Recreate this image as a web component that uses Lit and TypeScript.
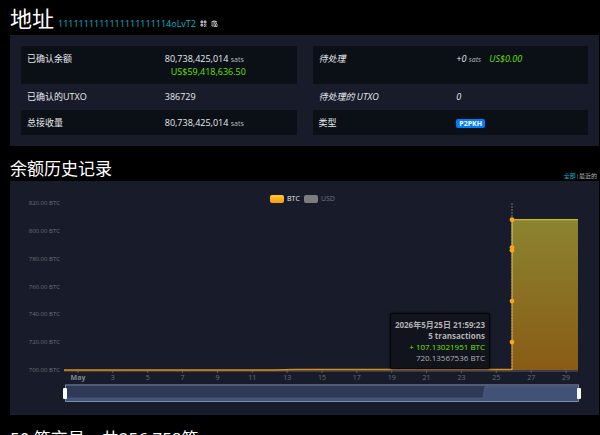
import { LitElement, html, svg, css } from "lit";
import { customElement, state } from "lit/decorators.js";

const LEFT = 54;
const RIGHT = 568;
const TOP = 22;
const BOTTOM = 189;
const STEP_X = 502;

const yTicks = [820, 800, 780, 760, 740, 720, 700];
const xTicks = ["May", "3", "5", "7", "9", "11", "13", "15", "17", "19", "21", "23", "25", "27", "29"];
const points = [808, 788, 786, 749.5, 720.1];

const yOf = (value: number) => BOTTOM - ((value - 700) / 120) * (BOTTOM - TOP);
const xOf = (index: number) => 68 + (index * (556 - 68)) / 14;

@customElement("balance-chart")
export class BalanceChart extends LitElement {
  @state() private from = 0;
  @state() private to = 100;

  static styles = css`
    :host {
      display: block;
      position: relative;
    }
    .plot {
      display: block;
      width: 100%;
      height: auto;
    }
    .axis {
      fill: #6b6e76;
      font-size: 6px;
    }
    .axis-y {
      text-anchor: end;
    }
    .axis-x {
      font-size: 7px;
      text-anchor: middle;
    }
    .month {
      font-weight: 700;
      fill: #85878e;
    }
    .legend {
      position: absolute;
      top: 13px;
      left: 0;
      right: 0;
      display: flex;
      justify-content: center;
      gap: 4px;
      padding-right: 4px;
    }
    .series {
      display: flex;
      align-items: center;
      gap: 3px;
      border: 0;
      padding: 0;
      background: none;
      color: #e6e6e8;
      font: inherit;
      font-size: 7px;
      line-height: 9px;
    }
    .swatch {
      width: 14px;
      height: 8px;
      border-radius: 2px;
      background: linear-gradient(#fdc92f, #fb9a0b);
    }
    .off {
      color: #71747b;
    }
    .off .swatch {
      background: #7c7c7c;
    }
    .tooltip {
      position: absolute;
      right: 109px;
      top: 132px;
      box-sizing: border-box;
      border: 1px solid #05060a;
      border-radius: 2px;
      padding: 5px 4px;
      background: #11131d;
      box-shadow: 0 0 3px #05060a;
      color: #b1b1b1;
      font-size: 8px;
      line-height: 11px;
      text-align: right;
      white-space: nowrap;
    }
    .strong {
      font-weight: 700;
    }
    .gain {
      color: #70e800;
    }
    .zoom {
      position: absolute;
      left: 9%;
      right: 3%;
      bottom: 13px;
      height: 18px;
    }
    .zoom input {
      position: absolute;
      inset: 0;
      width: 100%;
      height: 18px;
      margin: 0;
      appearance: none;
      background: none;
      pointer-events: none;
    }
    .zoom input::-webkit-slider-thumb {
      appearance: none;
      width: 4px;
      height: 11px;
      border-radius: 1px;
      background: #fff;
      pointer-events: auto;
    }
  `;

  render() {
    return html`
      <svg class="plot" viewBox="0 0 589 234" role="img" aria-label="余额历史记录">
        <defs>
          <linearGradient id="fill" x1="0" y1="0" x2="0" y2="1">
            <stop offset="0" stop-color="#8b8430" />
            <stop offset="1" stop-color="#895b15" />
          </linearGradient>
          <linearGradient id="edge" x1="0" y1="0" x2="0" y2="1">
            <stop offset="0" stop-color="#e8d535" />
            <stop offset="1" stop-color="#e8920f" />
          </linearGradient>
        </defs>
        ${yTicks.map((v) => svg`<text class="axis axis-y" x="50" y=${yOf(v) + 2}>${v}.00 BTC</text>`)}
        <line x1=${LEFT} y1=${BOTTOM + 1} x2=${RIGHT} y2=${BOTTOM + 1} stroke="#5c5f68" />
        ${xTicks.map(
          (label, i) => svg`
            <line x1=${xOf(i)} x2=${xOf(i)} y1=${BOTTOM} y2=${BOTTOM + 3} stroke="#5c5f68" />
            <text class="axis axis-x ${i === 0 ? "month" : ""}" x=${xOf(i)} y="199">${label}</text>`
        )}
        <rect x=${STEP_X} y=${yOf(808)} width=${RIGHT - STEP_X} height=${BOTTOM - yOf(808)} fill="url(#fill)" />
        <path d="M${LEFT} ${BOTTOM}H265L285 188.5H${STEP_X}" fill="none" stroke="#e08c10" stroke-width="1.5" />
        <rect x=${STEP_X - 0.5} y=${yOf(808)} width="1" height=${BOTTOM - yOf(808)} fill="url(#edge)" />
        <line x1=${STEP_X} y1=${yOf(808)} x2=${RIGHT} y2=${yOf(808)} stroke="#e8d535" />
        <line x1=${STEP_X} y1=${TOP} x2=${STEP_X} y2=${BOTTOM} stroke="#b1b4bb" stroke-dasharray="2 1" opacity="0.6" />
        ${points.map((v) => svg`<circle cx=${STEP_X} cy=${yOf(v)} r="2.4" fill="#fba51f" />`)}
        <rect x="55" y="203" width="514" height="17" fill="#2e3a57" />
        <path d="M55 217H473L475 205H569V220H55Z" fill="#425277" />
        <path d="M55 217H473L475 206H569" fill="none" stroke="#536080" stroke-width="0.7" />
        <rect x="55" y="203" width="514" height="2" fill="#515b73" />
        <path d="M55.5 204V220.5H568.5V204" fill="none" stroke="#7f8ba5" />
      </svg>
      <div class="legend">
        <button class="series" type="button"><span class="swatch"></span>BTC</button>
        <button class="series off" type="button"><span class="swatch"></span>USD</button>
      </div>
      <div class="tooltip">
        <div class="strong">2026年5月25日 21:59:23</div>
        <div class="strong">5 transactions</div>
        <div class="gain">+ 107.13021951 BTC</div>
        <div>720.13567536 BTC</div>
      </div>
      <div class="zoom">
        <input type="range" aria-label="起点" .value=${String(this.from)} @input=${(e: Event) => (this.from = +(e.target as HTMLInputElement).value)} />
        <input type="range" aria-label="终点" .value=${String(this.to)} @input=${(e: Event) => (this.to = +(e.target as HTMLInputElement).value)} />
      </div>
    `;
  }
}

@customElement("app-root")
export class AppRoot extends LitElement {
  static styles = css`
    :host {
      display: block;
      height: 100vh;
      overflow: hidden;
      box-sizing: border-box;
      padding: 4px 1px 0 10px;
      background: #000;
      color: #e8e9ec;
      font-family: "Open Sans", "Noto Sans CJK SC", sans-serif;
      font-size: 9px;
      line-height: 13px;
    }
    h1,
    h2 {
      margin: 0;
      color: #fff;
      font-weight: 400;
    }
    h1 {
      font-size: 22px;
      line-height: 29px;
    }
    h2 {
      font-size: 17px;
      line-height: 25px;
    }
    a {
      color: #00b7cc;
      text-decoration: none;
    }
    .title {
      display: flex;
      align-items: baseline;
      gap: 4px;
      padding-bottom: 2px;
    }
    .tools {
      display: flex;
      gap: 4px;
    }
    .tool {
      display: flex;
      border: 0;
      padding: 0;
      background: none;
      color: #d5d5d5;
    }
    .tool svg {
      width: 7px;
      height: 7px;
    }
    .panel {
      background: #181c2a;
    }
    .summary {
      display: grid;
      grid-template-columns: 1fr 1fr;
      gap: 16px;
      padding: 11px;
    }
    table {
      width: 100%;
      table-layout: fixed;
      border-collapse: collapse;
    }
    th,
    td {
      box-sizing: border-box;
      width: 50%;
      height: 25px;
      padding: 6px;
      font-weight: 400;
      text-align: left;
      vertical-align: top;
    }
    tr:nth-child(odd) {
      background: #0b0f16;
    }
    tr:first-child > * {
      height: 38px;
    }
    tr:nth-child(2) > * {
      height: 26px;
    }
    .sats {
      font-size: 7px;
      line-height: 1;
      color: #b9bbc0;
    }
    .fiat {
      color: #68e000;
      margin-left: 6px;
      white-space: nowrap;
    }
    .pending {
      font-style: italic;
    }
    .badge {
      display: block;
      width: fit-content;
      margin-top: 3px;
      border-radius: 2px;
      padding: 0 3px;
      background: #007cfa;
      color: #fff;
      font-size: 7px;
      font-weight: 700;
      line-height: 9px;
    }
    .section {
      display: flex;
      justify-content: space-between;
      align-items: flex-end;
      padding: 10px 2px 0 0;
    }
    .range {
      font-size: 6px;
      line-height: 9px;
      color: #999;
    }
    .range .plain {
      color: #b5b5b5;
    }
    .list {
      padding-top: 11px;
    }
  `;

  render() {
    return html`
      <header class="title">
        <h1>地址</h1>
        <a href="#address">1111111111111111111114oLvT2</a>
        <span class="tools">
          <button class="tool" type="button" aria-label="二维码">
            <svg viewBox="0 0 14 14" fill="none" stroke="currentColor" stroke-width="2">
              <path d="M2 2h3.5v3.5H2zM8.5 2H12v3.5H8.5zM2 8.5h3.5V12H2z" />
              <path d="M8 8.5h2M11 8.5h2M9.5 10.5h2M8 12.5h2M11 12.5h2" />
            </svg>
          </button>
          <button class="tool" type="button" aria-label="复制">
            <svg viewBox="0 0 14 14" fill="none" stroke="currentColor" stroke-width="1.6">
              <path d="M5 3H2v9h3M4 2h5v2H4zM9 3h2v2M6 6h4l2 2v5H6zM8 9h2M8 11h2" />
            </svg>
          </button>
        </span>
      </header>
      <section class="panel summary">
        <table>
          <tr>
            <th scope="row">已确认余额</th>
            <td>80,738,425,014 <span class="sats">sats</span> <span class="fiat">US$59,418,636.50</span></td>
          </tr>
          <tr>
            <th scope="row">已确认的UTXO</th>
            <td>386729</td>
          </tr>
          <tr>
            <th scope="row">总接收量</th>
            <td>80,738,425,014 <span class="sats">sats</span></td>
          </tr>
        </table>
        <table>
          <tr class="pending">
            <th scope="row">待处理</th>
            <td>+0 <span class="sats">sats</span> <span class="fiat">US$0.00</span></td>
          </tr>
          <tr class="pending">
            <th scope="row">待处理的 UTXO</th>
            <td>0</td>
          </tr>
          <tr>
            <th scope="row">类型</th>
            <td><span class="badge">P2PKH</span></td>
          </tr>
        </table>
      </section>
      <div class="section">
        <h2>余额历史记录</h2>
        <nav class="range"><a href="#all">全部</a>|<a class="plain" href="#recent">最近的</a></nav>
      </div>
      <section class="panel"><balance-chart></balance-chart></section>
      <h2 class="list">50 笔交易，共256,758笔</h2>
    `;
  }
}
